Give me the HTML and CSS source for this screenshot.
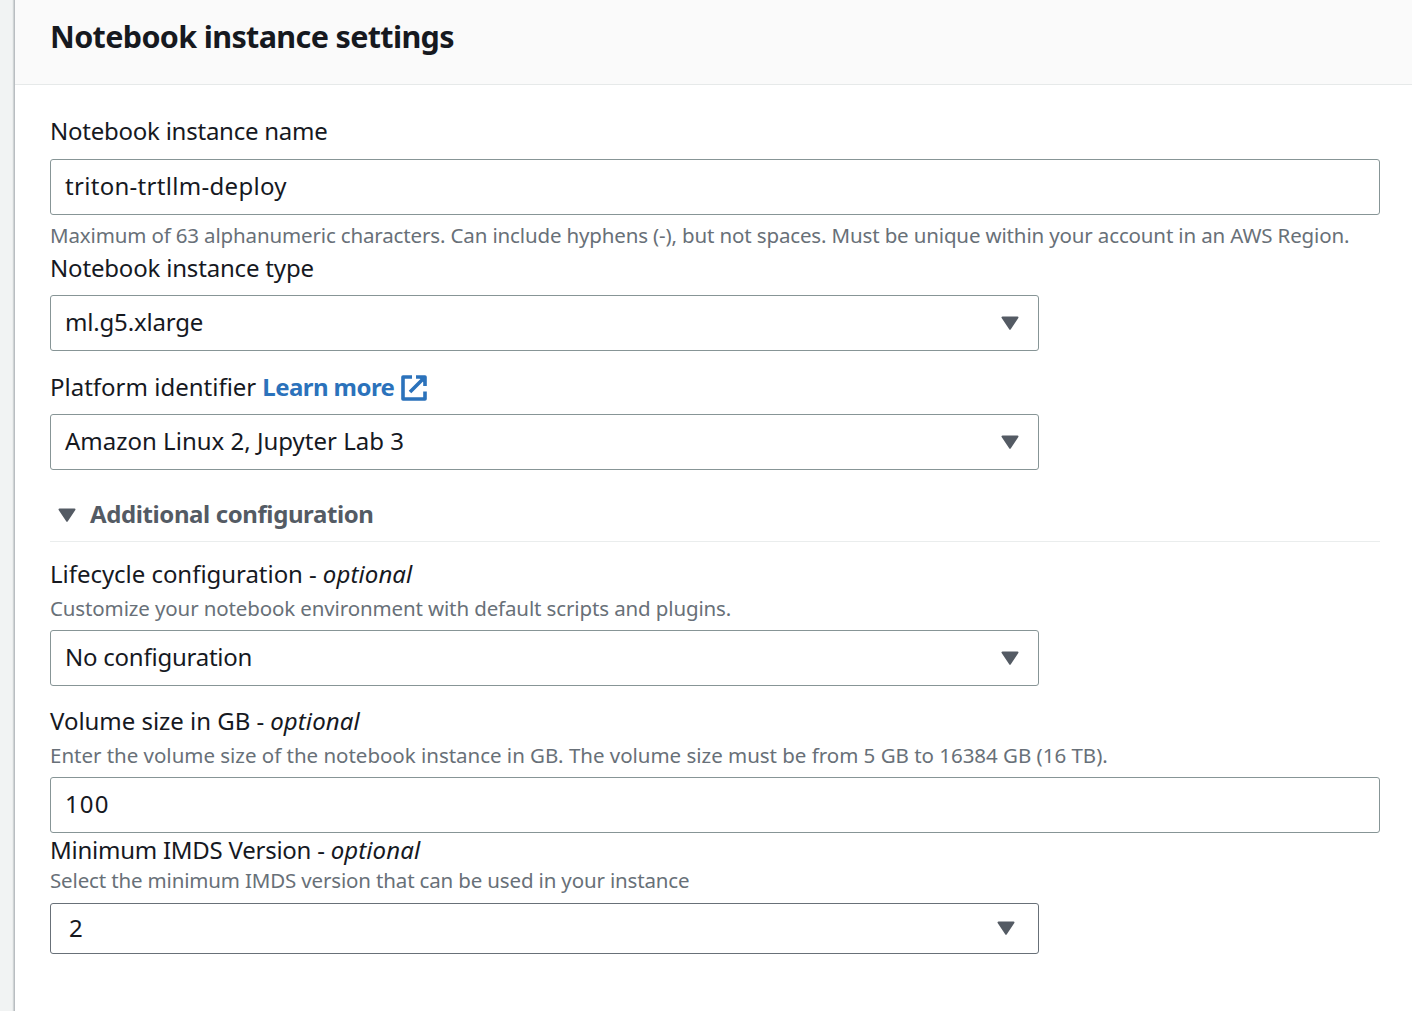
FILE: index.html
```
<!DOCTYPE html>
<html lang="en">
<head>
<meta charset="utf-8">
<title>Notebook instance settings</title>
<link rel="stylesheet" href="styles.css">
</head>
<body>
<main class="panel">
  <header class="panel-header"><h1 class="title">Notebook instance settings</h1></header>
  <form class="panel-body">
    <section class="field field-name">
      <label class="label tight">Notebook instance name</label>
      <div class="control"><span class="value value-name">triton-trtllm-deploy</span></div>
      <p class="hint hint-name">Maximum of 63 alphanumeric characters. Can include hyphens (-), but not spaces. Must be unique within your account in an AWS Region.</p>
    </section>
    <section class="field field-type">
      <label class="label snug">Notebook instance type</label>
      <div class="control select"><span class="value snug">ml.g5.xlarge</span>
        <svg class="caret" viewBox="0 0 18 15"><path d="M1.5 1.5h15L9 12.8z"/></svg></div>
    </section>
    <section class="field field-platform">
      <div class="label"><span class="platform">Platform identifier</span><a class="link">Learn more</a>
        <svg class="external" viewBox="0 0 26 26"><path d="M11 2H2v22h22v-7.5M15 2h9v9M24 2L9 17"/><path class="tip" d="M17.5 2H24v6.5z"/></svg></div>
      <div class="control select"><span class="value">Amazon Linux 2, Jupyter Lab 3</span>
        <svg class="caret" viewBox="0 0 18 15"><path d="M1.5 1.5h15L9 12.8z"/></svg></div>
    </section>
    <div class="expander">
      <svg class="caret" viewBox="0 0 18 15"><path d="M1.5 1.5h15L9 12.8z"/></svg>
      <h2 class="expander-title">Additional configuration</h2>
    </div>
    <section class="field field-lifecycle">
      <label class="label"><span class="lifecycle">Lifecycle configuration -</span><em class="optional">optional</em></label>
      <p class="hint hint-lifecycle">Customize your notebook environment with default scripts and plugins.</p>
      <div class="control select"><span class="value tight">No configuration</span>
        <svg class="caret" viewBox="0 0 18 15"><path d="M1.5 1.5h15L9 12.8z"/></svg></div>
    </section>
    <section class="field field-volume">
      <label class="label"><span class="volume">Volume size in GB -</span><em class="optional">optional</em></label>
      <p class="hint">Enter the volume size of the notebook instance in GB. The volume size must be from 5 GB to 16384 GB (16 TB).</p>
      <div class="control"><span class="value value-volume">100</span></div>
    </section>
    <section class="field field-imds">
      <label class="label"><span class="imds">Minimum IMDS Version -</span><em class="optional">optional</em></label>
      <p class="hint hint-imds">Select the minimum IMDS version that can be used in your instance</p>
      <div class="control select select-native"><span class="value">2</span>
        <svg class="caret" viewBox="0 0 18 15"><path d="M1.5 1.5h15L9 12.8z"/></svg></div>
    </section>
  </form>
</main>
</body>
</html>
```

FILE: styles.css
```
* { box-sizing: border-box; }
body {
  margin: 0;
  padding-left: 14px;
  height: 1011px;
  overflow: hidden;
  background: #f1f3f3;
  color: #16191f;
  font: 24px/32px "Noto Sans", sans-serif;
}
h1, h2, p { margin: 0; }
.panel {
  height: 1011px;
  background: #fff;
  border-left: 1px solid #b9bdc1;
  box-shadow: -1px 0 1px rgba(0, 28, 36, .14);
}
.panel-header {
  height: 85px;
  padding: 16px 35px 0;
  background: #fafafa;
  border-bottom: 1px solid #e6e9e9;
}
.title { font-size: 30.5px; line-height: 40px; font-weight: 700; letter-spacing: -.64px; }
.panel-body { padding: 30px 32px 0 35px; }
.field { display: flex; flex-direction: column; }
.label { display: flex; height: 32px; white-space: nowrap; }
.hint {
  height: 26px;
  font-size: 20.5px;
  line-height: 26px;
  letter-spacing: -.02px;
  color: #687078;
  white-space: nowrap;
}
.control {
  display: flex;
  align-items: center;
  justify-content: space-between;
  height: 56px;
  padding: 0 19px 3px 14px;
  border: 1px solid #879596;
  border-radius: 3px;
}
.select { width: 989px; }
.select-native { height: 51px; padding: 0 23px 2px 18px; border-color: #687078; }
.caret { width: 18px; height: 15px; flex: none; margin-top: 4px; }
.select-native .caret { margin-top: 2px; }
.caret path { fill: #545b64; stroke: #545b64; stroke-width: 2; stroke-linejoin: round; }
.tight { letter-spacing: -.24px; }
.snug { letter-spacing: -.18px; }
.optional { margin-left: 6px; letter-spacing: .1px; }
.field-name .control { margin-top: 12px; }
.value-name { letter-spacing: .3px; }
.hint-name { margin-top: 7px; letter-spacing: -.145px; }
.field-type { margin-top: 4px; }
.field-type .control { margin-top: 11px; }
.field-platform { margin-top: 20px; }
.field-platform .control { margin-top: 11px; }
.link { margin-left: 6px; color: #2b72bb; font-weight: 700; letter-spacing: -.56px; }
.external { width: 26px; height: 26px; margin: 4px 0 0 7px; }
.external path { fill: none; stroke: #2b72bb; stroke-width: 3.6; stroke-linejoin: round; }
.external .tip { fill: #2b72bb; stroke: none; }
.expander {
  display: flex;
  align-items: center;
  height: 55px;
  margin-top: 17px;
  padding: 0 0 1px 8px;
  border-bottom: 1px solid #eaeded;
  color: #545b64;
}
.expander-title { margin-left: 14px; font-size: 24px; line-height: 32px; letter-spacing: -.4px; }
.field-lifecycle { margin-top: 16px; }
.lifecycle { letter-spacing: -.04px; }
.field-lifecycle .hint { margin-top: 5px; letter-spacing: -.125px; }
.field-lifecycle .control { margin-top: 9px; }
.field-volume { margin-top: 19px; }
.volume { letter-spacing: -.03px; }
.field-volume .hint { margin-top: 5px; }
.field-volume .control { margin-top: 9px; }
.value-volume { letter-spacing: 1.1px; }
.field-imds { margin-top: 1px; }
.imds { letter-spacing: -.25px; }
.field-imds .hint { margin-top: 1px; letter-spacing: -.155px; }
.field-imds .control { margin-top: 10px; }
```
